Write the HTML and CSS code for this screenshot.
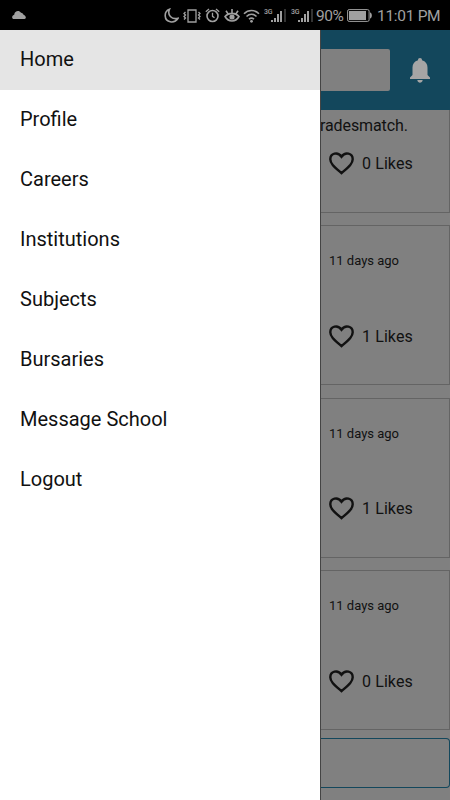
FILE: index.html
```html
<!DOCTYPE html>
<html lang="en">
<head>
<meta charset="utf-8">
<title>Menu</title>
<link rel="stylesheet" href="styles.css">
</head>
<body>
<header class="status">
  <svg class="cloud" width="14" height="8" viewBox="0 0 14 8"><path d="M2 8C-.5 8-.5 4.500 2.200 3.700 2.600 0 7-1.200 9 1.800c1.500.1 2.200.9 2.500 2C14.300 4.800 14.500 8 12.500 8z"/></svg>
  <svg class="moon" width="15" height="15" viewBox="0 0 15 15"><path class="line thick" d="M5.500 1.200C-.5 3.500-.2 12.500 6.300 13.800c3.200.6 6-.8 7.700-3.500C7.500 12 3 7 5.500 1.200z"/></svg>
  <svg class="vibrate" width="18" height="14" viewBox="0 0 18 14"><path class="line" d="M5 1h8v12H5zM2.500 3L1 4.500 2.500 6 1 7.500 2.500 9 1 10.500M15.500 3L17 4.500 15.500 6 17 7.500 15.500 9 17 10.500"/></svg>
  <svg class="alarm" width="15" height="15" viewBox="0 0 15 15"><circle class="line thick" cx="7.500" cy="8" r="5.500"/><path class="line" d="M7.500 4.800v3.500l2 1.500M.8 3.700L4 1M14.200 3.700L11 1"/></svg>
  <svg class="eye" width="16" height="15" viewBox="0 0 16 15"><path class="line thick" d="M1 8.500C4.500 4.300 11.500 4.300 15 8.500 11.500 14.500 4.500 14.500 1 8.500zM8 4.700V1M3.800 5.500L2 2.800M12.200 5.500L14 2.800"/><circle cx="8" cy="9" r="2.600"/></svg>
  <svg class="wifi" width="17" height="14" viewBox="0 0 17 14"><path class="line thick" d="M1 4.700C5.200.5 11.800.5 16 4.700M3.500 7.500c3-2.800 7-2.800 10 0M6 10.200c1.600-1.300 3.400-1.300 5 0"/><circle cx="8.500" cy="12.300" r="1.400"/></svg>
  <span class="net">3G</span>
  <svg class="signal" width="15" height="14" viewBox="0 0 15 14"><path d="M0 11h2v2H0zM3 9h2v4H3zM6 5h2v8H6zM9 2h2v11H9z"/><path class="dim" d="M13 0h2v13h-2z"/></svg>
  <span class="net second">3G</span>
  <svg class="signal" width="15" height="14" viewBox="0 0 15 14"><path d="M0 11h2v2H0zM3 9h2v4H3zM6 5h2v8H6zM9 2h2v11H9z"/><path class="dim" d="M13 0h2v13h-2z"/></svg>
  <span class="percent">90%</span>
  <svg class="battery" width="26" height="13" viewBox="0 0 26 13"><rect class="line thin" x=".6" y=".6" width="21.500" height="11.800" rx="1.500"/><path d="M2 2h17v9H2zM23 3.500c2.500 0 2.500 6 0 6z"/></svg>
  <span class="time">11:01 PM</span>
</header>
<div class="screen">
  <nav class="drawer">
    <a class="item active">Home</a>
    <a class="item">Profile</a>
    <a class="item">Careers</a>
    <a class="item">Institutions</a>
    <a class="item">Subjects</a>
    <a class="item">Bursaries</a>
    <a class="item">Message School</a>
    <a class="item">Logout</a>
  </nav>
  <main class="page">
    <div class="topbar">
      <div class="search"></div>
      <svg class="bell" width="20" height="25" viewBox="0 0 20 25"><path d="M10 0c1.300 0 2 .8 2 2.200 3.600 1 5.500 3.800 5.500 7.300v7.500L20 19.500V21H0v-1.500L2.500 17V9.500C2.500 6 4.400 3.200 8 2.200 8 .8 8.700 0 10 0zM7.300 22h5.400c-.5 3.500-4.900 3.500-5.400 0z"/></svg>
    </div>
    <section class="card first">
      <p class="message">radesmatch.</p>
      <div class="likes"><svg class="heart" viewBox="0 0 25 23"><path d="M12.500 21.200C5.500 15 1.300 11.800 1.300 7.300 1.300 1.300 8.700-.8 12.500 4.700c3.800-5.500 11.200-3.400 11.200 2.600 0 4.500-4.200 7.700-11.200 13.900z"/></svg>0 Likes</div>
    </section>
    <section class="card">
      <p class="date">11 days ago</p>
      <div class="likes"><svg class="heart" viewBox="0 0 25 23"><path d="M12.500 21.200C5.500 15 1.300 11.800 1.300 7.300 1.300 1.300 8.700-.8 12.500 4.700c3.800-5.500 11.200-3.400 11.200 2.600 0 4.500-4.200 7.700-11.200 13.900z"/></svg>1 Likes</div>
    </section>
    <section class="card">
      <p class="date">11 days ago</p>
      <div class="likes"><svg class="heart" viewBox="0 0 25 23"><path d="M12.500 21.200C5.500 15 1.300 11.800 1.300 7.300 1.300 1.300 8.700-.8 12.500 4.700c3.800-5.500 11.200-3.400 11.200 2.600 0 4.500-4.200 7.700-11.200 13.900z"/></svg>1 Likes</div>
    </section>
    <section class="card">
      <p class="date">11 days ago</p>
      <div class="likes"><svg class="heart" viewBox="0 0 25 23"><path d="M12.500 21.200C5.500 15 1.300 11.800 1.300 7.300 1.300 1.300 8.700-.8 12.500 4.700c3.800-5.500 11.200-3.400 11.200 2.600 0 4.500-4.200 7.700-11.200 13.900z"/></svg>0 Likes</div>
    </section>
    <div class="composer"></div>
  </main>
</div>
</body>
</html>
```
FILE: styles.css
```css
* { box-sizing: border-box; }
body {
  margin: 0;
  width: 450px;
  height: 800px;
  overflow: hidden;
  font-family: Roboto, sans-serif;
  color: #111;
  background: #808080;
}
p { margin: 0; }
svg { display: block; flex: none; }

.status {
  display: flex;
  align-items: center;
  height: 30px;
  padding: 1px 0 0 12px;
  background: #000;
  color: #a0a0a0;
  white-space: nowrap;
}
.status svg { fill: #a0a0a0; }
.status .line { fill: none; stroke: #a0a0a0; stroke-width: 1.3; }
.status .thick { stroke-width: 1.6; }
.status .thin { stroke-width: 1; }
.status .dim { fill: #333; }
.cloud { margin-top: -2px; }
.moon { margin-left: 138px; }
.vibrate { margin-left: 4px; }
.alarm { margin-left: 4px; }
.eye { margin-left: 4px; }
.wifi { margin-left: 3px; }
.net {
  width: 8px;
  margin: 0 0 8px 4px;
  font: 500 7px/8px Roboto, sans-serif;
  letter-spacing: -.3px;
}
.second { margin-left: 5px; }
.signal { margin-left: -1px; }
.percent { width: 28px; margin-left: 3px; font-size: 15.500px; letter-spacing: -.45px; }
.battery { margin-left: 3px; }
.time { margin-left: 4px; font-size: 15.500px; letter-spacing: -.3px; }

.screen {
  display: grid;
  grid-template-columns: 320px 130px;
  height: 770px;
}
.drawer { background: #fff; }
.item {
  display: flex;
  align-items: center;
  height: 60px;
  padding: 0 20px 2px;
  font-size: 20px;
}
.active { background: #e5e5e5; }

.page {
  display: flex;
  flex-direction: column;
  overflow: hidden;
  border-left: 1px solid #444;
}
.topbar {
  display: flex;
  align-items: center;
  flex: none;
  height: 80px;
  background: #13475c;
}
.search { width: 69px; height: 42px; border-radius: 0 2px 2px 0; background: #808080; }
.bell { margin-left: 20px; fill: #a5a5a5; }
.card {
  flex: none;
  height: 160px;
  margin-bottom: 12.500px;
  padding: 26px 0 0 8px;
  border: 1px solid #646464;
  border-left: 0;
}
.first { height: 102.500px; padding-top: 5px; border-top: 0; }
.message { margin-left: -9px; font-size: 16px; line-height: 22px; letter-spacing: -.1px; }
.date { font-size: 13px; line-height: 18px; }
.likes {
  display: flex;
  align-items: center;
  gap: 8px;
  height: 30px;
  margin-top: 51px;
  font-size: 16px;
  letter-spacing: .1px;
}
.first .likes { margin-top: 11px; }
.heart { width: 25px; height: 23px; fill: none; stroke: #111; stroke-width: 2.4; }
.composer {
  flex: none;
  height: 50px;
  margin-top: -5px;
  border: 1px solid #13475c;
  border-left: 0;
  border-radius: 0 4px 4px 0;
}
```
